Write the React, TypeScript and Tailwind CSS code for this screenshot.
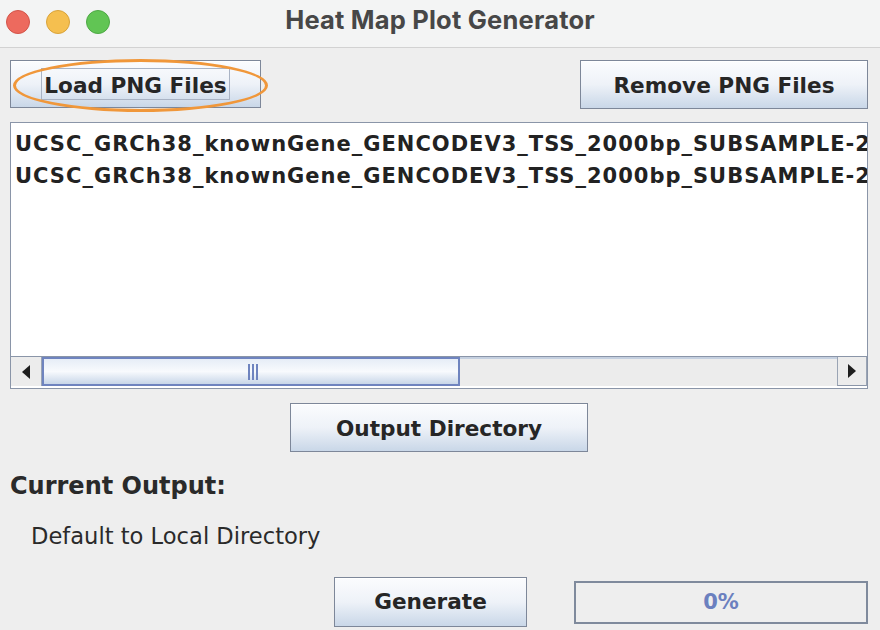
import React from "react";

const btnBase =
  "flex items-center justify-center border border-[#7d8799] bg-gradient-to-b from-[#fbfcfe] via-[#eef2f8] to-[#c9d7e8] text-[21.6px] font-bold text-[#262626] shadow-[inset_0_1px_0_#ffffff]";
const btn = `${btnBase} pt-[3px]`;

export default function App() {
  return (
    <div
      className="w-[880px] h-[630px] bg-[#eeeeee] flex flex-col overflow-hidden"
      style={{ fontFamily: '"DejaVu Sans", "Liberation Sans", sans-serif' }}
    >
      {/* Title bar */}
      <div className="relative h-[48px] shrink-0 bg-[#f3f4f4] border-b border-[#d2d2d2] flex items-center justify-center">
        <div className="absolute left-[6px] top-[10px] flex gap-[16px]">
          <div className="w-[24px] h-[24px] rounded-full bg-[#ed6a5e] border border-[#d35449]" />
          <div className="w-[24px] h-[24px] rounded-full bg-[#f5bf4f] border border-[#d9a33a]" />
          <div className="w-[24px] h-[24px] rounded-full bg-[#61c554] border border-[#4ea945]" />
        </div>
        <span
          className="text-[25.5px] font-bold tracking-[0.2px] text-[#474747] -mt-[6px]"
          style={{ fontFamily: 'Inter, "DejaVu Sans", sans-serif' }}
        >
          Heat Map Plot Generator
        </span>
      </div>

      <div className="flex flex-col pl-[10px] pr-[12px]">
        {/* Top buttons */}
        <div className="flex justify-between items-start mt-[12px]">
          <div className="relative">
            <div className={`${btn} w-[251px] h-[48px]`}>
              <div className="px-[2px] h-[32px] -mt-[3px] pt-[5px] flex items-center border border-[#a9b3c4]">Load PNG Files</div>
            </div>
            <div className="absolute left-[3px] top-[-1px] w-[255px] h-[53px] rounded-[50%] border-[3px] border-[#f0973a]" />
          </div>
          <div className={`${btn} w-[288px] h-[49px]`}>Remove PNG Files</div>
        </div>

        {/* List */}
        <div className="mt-[13px] h-[267px] border border-[#8a95a8] bg-white flex flex-col">
          <div className="flex-1 overflow-hidden pt-[5px] pl-[4px] text-[21px] tracking-[1px] font-bold text-[#222222] whitespace-nowrap">
            <div className="h-[32px] leading-[32px]">UCSC_GRCh38_knownGene_GENCODEV3_TSS_2000bp_SUBSAMPLE-2000_heatmap_01.png</div>
            <div className="h-[32px] leading-[32px]">UCSC_GRCh38_knownGene_GENCODEV3_TSS_2000bp_SUBSAMPLE-2000_heatmap_02.png</div>
          </div>
          {/* Horizontal scrollbar */}
          <div className="h-[30px] mb-[2px] flex border-t border-[#8a95a8] bg-[#ececec]">
            <div className="w-[31px] flex items-center justify-center border-r border-[#9aa4b4]">
              <svg width="8" height="14" viewBox="0 0 8 14">
                <path d="M8 0 L0 7 L8 14 Z" fill="#1e1e1e" />
              </svg>
            </div>
            <div className="w-[418px] border-2 border-[#6f84bf] bg-gradient-to-b from-[#e6edf7] via-[#f8fafd] to-[#c8d6e8] flex items-center justify-center">
              <div className="flex gap-[2px] ml-[4px]">
                <div className="w-[2px] h-[16px] bg-[#6f84bf]" />
                <div className="w-[2px] h-[16px] bg-[#6f84bf]" />
                <div className="w-[2px] h-[16px] bg-[#6f84bf]" />
              </div>
            </div>
            <div className="flex-1 border-t-2 border-[#c5d0e0]" />
            <div className="w-[30px] flex items-center justify-center border-l border-[#9aa4b4] border-b border-r border-b-[#8a95a8]">
              <svg width="8" height="14" viewBox="0 0 8 14">
                <path d="M0 0 L8 7 L0 14 Z" fill="#1e1e1e" />
              </svg>
            </div>
          </div>
        </div>

        {/* Output Directory */}
        <div className="flex justify-center mt-[14px]">
          <div className={`${btn} w-[298px] h-[49px]`}>Output Directory</div>
        </div>

        <div className="mt-[19px] text-[24px] font-bold text-[#2a2a2a] leading-[30px]">Current Output:</div>
        <div className="mt-[20px] ml-[21px] text-[22.6px] text-[#2a2a2a] leading-[30px]">Default to Local Directory</div>

        {/* Bottom row */}
        <div className="flex items-center mt-[26px]">
          <div className="ml-[324px] ">
            <div className={`${btnBase} w-[193px] h-[50px]`}>Generate</div>
          </div>
          <div className="ml-[47px] w-[294px] h-[43px] border-2 border-[#7f8a9c] bg-[#eeeeee] flex items-center justify-center pt-[2px] text-[21px] font-bold text-[#6b80bf]">
            0%
          </div>
        </div>
      </div>
    </div>
  );
}
